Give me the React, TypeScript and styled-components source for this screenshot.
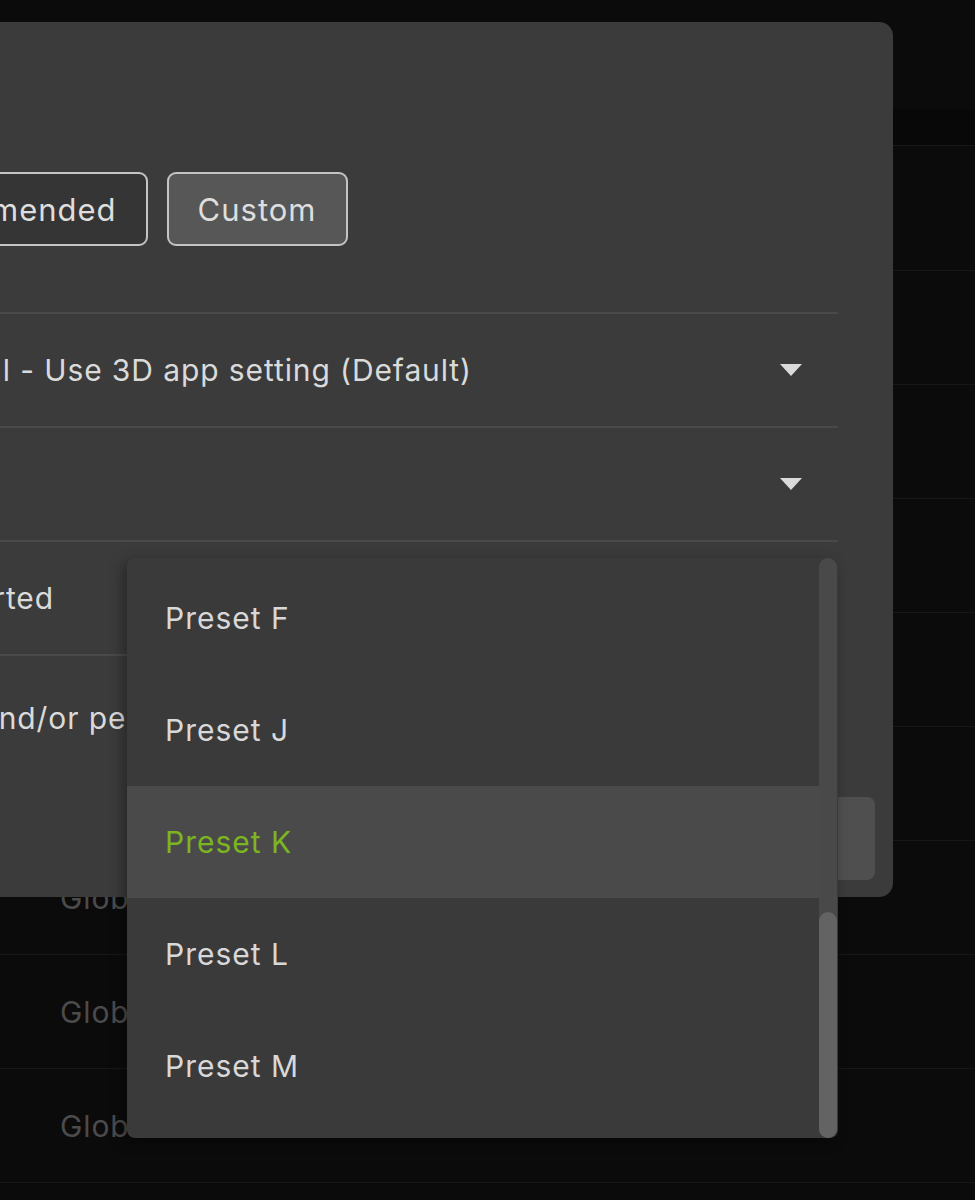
import React from 'react';
import styled, { createGlobalStyle, css } from 'styled-components';

const GlobalStyle = createGlobalStyle`
  html, body {
    margin: 0;
    padding: 0;
    background: #0b0b0b;
  }
  body {
    font-family: Inter, 'Noto Sans', 'Liberation Sans', sans-serif;
    -webkit-font-smoothing: antialiased;
  }
`;

const Screen = styled.div`
  position: relative;
  width: 975px;
  height: 1200px;
  overflow: hidden;
  background: #0b0b0b;
`;

/* page sitting behind the dialog */
const BackPage = styled.div`
  display: flex;
  flex-direction: column;
  padding-top: 109px;
`;

const BackBand = styled.div`
  height: 36px;
  background: #080808;
  border-bottom: 1px solid #171717;
`;

const BackRow = styled.div<{ $tall?: boolean }>`
  height: ${(p) => (p.$tall ? '124px' : '113px')};
  display: flex;
  align-items: center;
  padding-left: 60px;
  border-bottom: 1px solid #171717;
  font-size: 30px;
  letter-spacing: 0.9px;
  color: #4b4b4b;
  white-space: nowrap;
`;

const Dialog = styled.div`
  position: absolute;
  top: 22px;
  left: -420px;
  width: 1313px;
  height: 875px;
  box-sizing: border-box;
  background: #3b3b3b;
  border-radius: 14px;
  padding: 150px 55px 0 300px;
  display: flex;
  flex-direction: column;
  color: #dadada;
`;

const ButtonGroup = styled.div`
  display: flex;
  gap: 19px;
  height: 74px;
  margin: 0 0 66px -26px;
`;

const ModeButton = styled.button<{ $active?: boolean }>`
  height: 74px;
  box-sizing: border-box;
  padding: 0 29px;
  border: 2px solid #c4c4c4;
  border-radius: 9px;
  background: ${(p) => (p.$active ? '#575757' : '#353535')};
  color: #dedede;
  font-family: inherit;
  font-size: 31px;
  letter-spacing: 1px;
  white-space: nowrap;
`;

const SettingRow = styled.div<{ $inset?: number }>`
  height: 114px;
  flex-shrink: 0;
  box-sizing: border-box;
  border-top: 2px solid #4a4a4a;
  display: flex;
  align-items: center;
  justify-content: space-between;
  padding: 0 36px 0 ${(p) => p.$inset ?? 35}px;
  font-size: 30px;
  letter-spacing: 0.9px;
  white-space: nowrap;
`;

const Caret = styled.span`
  width: 0;
  height: 0;
  border-left: 11px solid transparent;
  border-right: 11px solid transparent;
  border-top: 12px solid #dadada;
`;

const Description = styled.div`
  padding-top: 44px;
  font-size: 30px;
  letter-spacing: 0.9px;
  white-space: nowrap;
  border-top: 2px solid #4a4a4a;
`;

const Footer = styled.div`
  margin-top: auto;
  margin-right: -37px;
  margin-bottom: 17px;
  display: flex;
  justify-content: flex-end;
`;

const ApplyButton = styled.button`
  width: 240px;
  height: 83px;
  border: none;
  border-radius: 8px;
  background: #4f4f4f;
  color: #dcdcdc;
  font-family: inherit;
  font-size: 30px;
`;

const Menu = styled.div`
  position: absolute;
  top: 558px;
  left: 127px;
  width: 711px;
  height: 580px;
  background: #3a3a3a;
  border-radius: 8px;
  box-shadow: -4px 4px 14px rgba(0, 0, 0, 0.35);
  overflow: hidden;
  display: flex;
`;

const MenuList = styled.ul`
  flex: 1;
  list-style: none;
  margin: 0;
  padding: 4px 0 0;
`;

const MenuItem = styled.li<{ $selected?: boolean }>`
  height: 112px;
  display: flex;
  align-items: center;
  padding-left: 38px;
  font-size: 30px;
  letter-spacing: 1px;
  color: #d8d8d8;
  ${(p) =>
    p.$selected &&
    css`
      background: #4a4a4a;
      color: #7cb51f;
    `}
`;

const Track = styled.div`
  width: 18px;
  margin-right: 1px;
  border-radius: 9px;
  background: #494949;
  display: flex;
  flex-direction: column;
  justify-content: flex-end;
`;

const Thumb = styled.div`
  height: 226px;
  border-radius: 9px;
  background: #636363;
`;

const presets = ['Preset F', 'Preset J', 'Preset K', 'Preset L', 'Preset M'];
const backRows = Array.from({ length: 9 }, (_, i) => i);

export default function App() {
  return (
    <>
      <GlobalStyle />
      <Screen>
        <BackPage>
          <BackBand />
          {backRows.map((i) => (
            <BackRow key={i} $tall={i === 0}>
              Global
            </BackRow>
          ))}
        </BackPage>

        <Dialog>
          <ButtonGroup>
            <ModeButton>Recommended</ModeButton>
            <ModeButton $active>Custom</ModeButton>
          </ButtonGroup>
          <SettingRow>
            <span>Global - Use 3D app setting (Default)</span>
            <Caret />
          </SettingRow>
          <SettingRow>
            <span />
            <Caret />
          </SettingRow>
          <SettingRow $inset={17}>
            <span>Supported</span>
            <Caret />
          </SettingRow>
          <Description>Image and/or performance</Description>
          <Footer>
            <ApplyButton>Apply</ApplyButton>
          </Footer>
        </Dialog>

        <Menu>
          <MenuList>
            {presets.map((p) => (
              <MenuItem key={p} $selected={p === 'Preset K'}>
                {p}
              </MenuItem>
            ))}
          </MenuList>
          <Track>
            <Thumb />
          </Track>
        </Menu>
      </Screen>
    </>
  );
}
